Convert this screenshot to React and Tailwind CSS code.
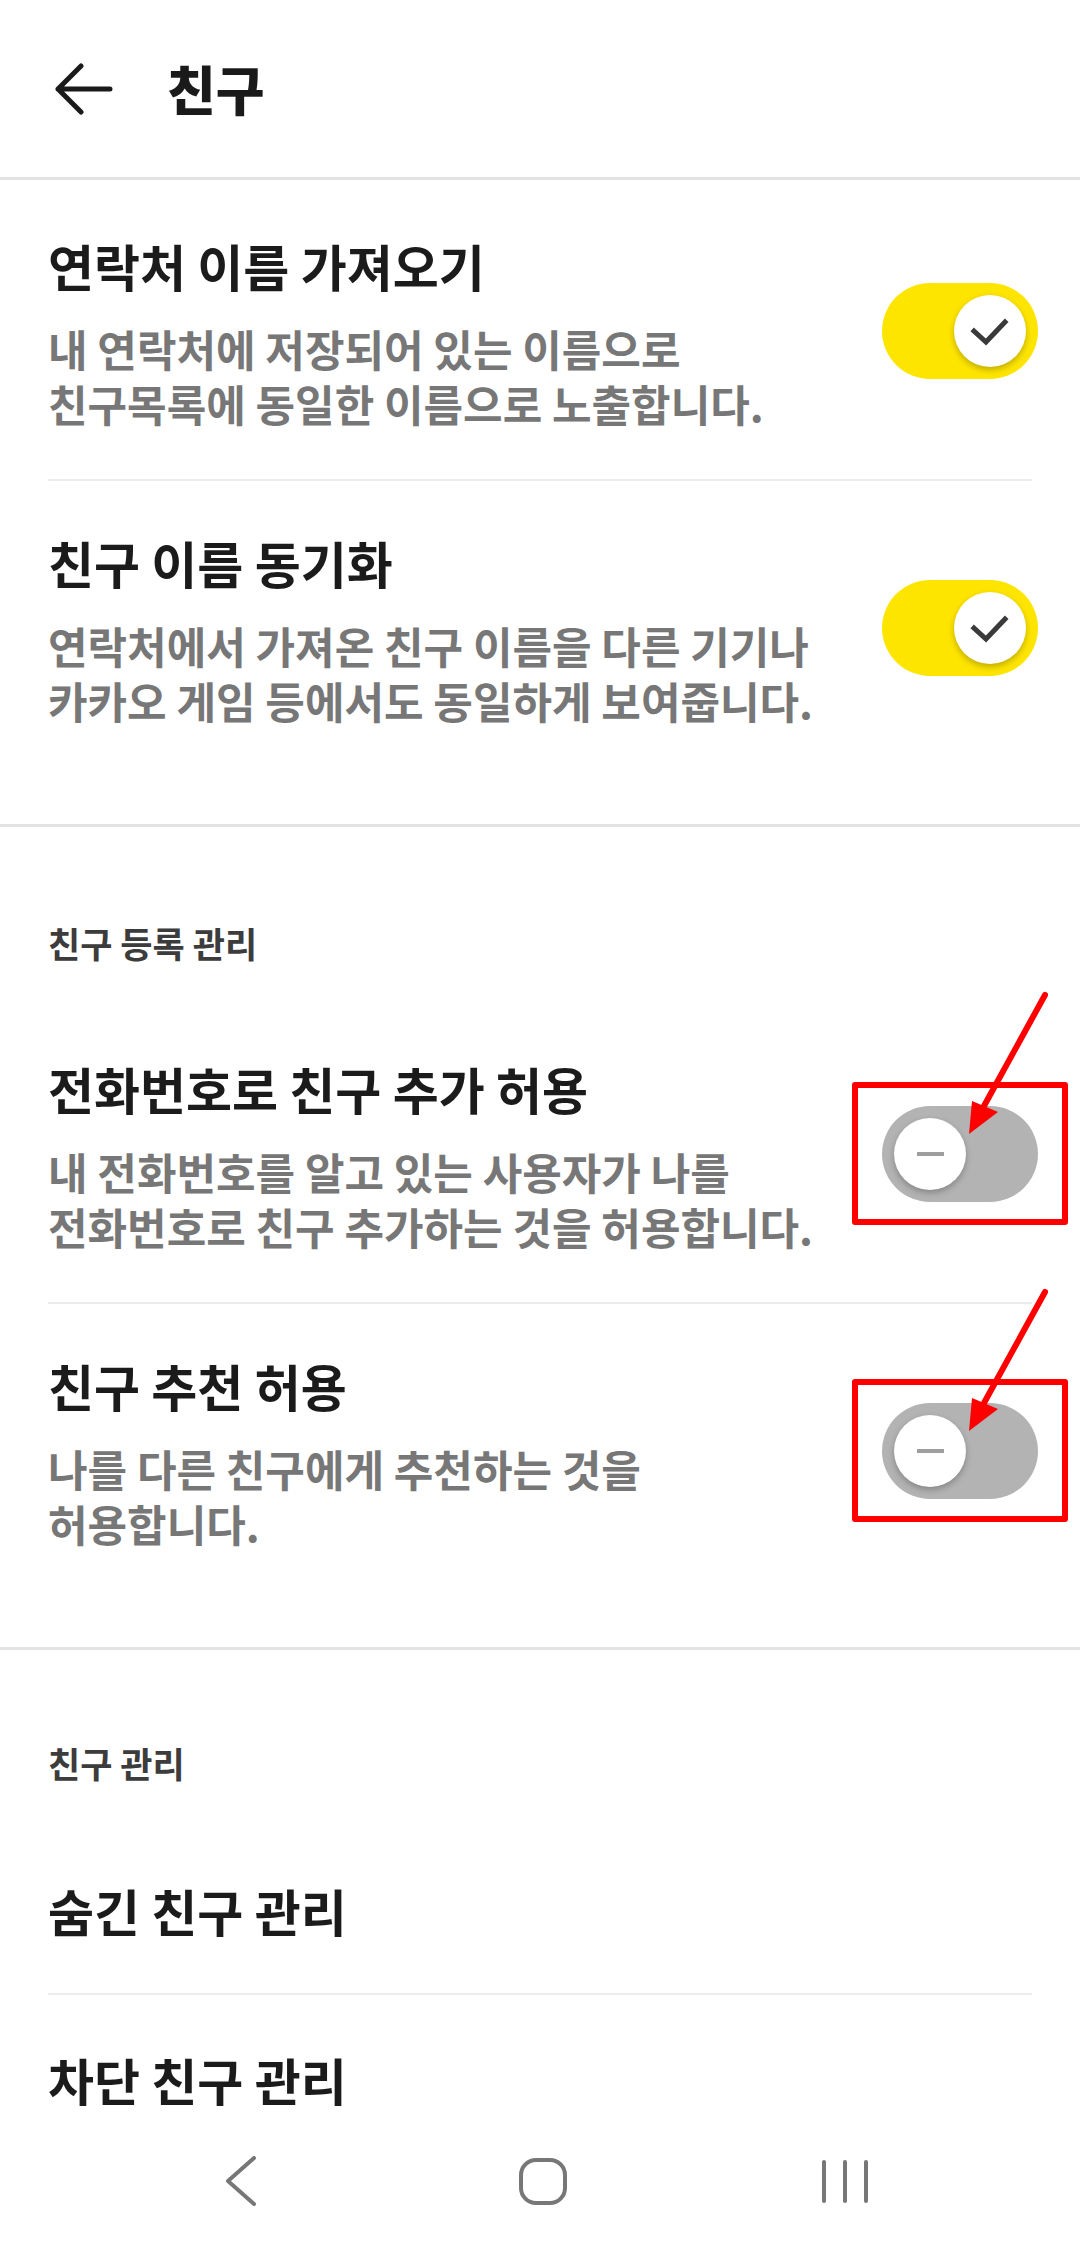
import React from "react";

const font = "font-['Noto_Sans_CJK_KR','Noto_Sans',sans-serif]";

// Toggle switch (Kakao yellow when on)
function Toggle({ on }) {
  return (
    <div
      className={`w-[156px] h-[96px] rounded-full flex items-center px-[12px] ${
        on ? "bg-[#fee500] justify-end" : "bg-[#b3b3b3] justify-start"
      }`}
    >
      <div className="w-[72px] h-[72px] rounded-full bg-white shadow-[0_3px_6px_rgba(0,0,0,0.25)] flex items-center justify-center">
        {on ? (
          <svg width="72" height="72" viewBox="0 0 72 72">
            <path
              d="M20 36 L32 47 L51 27"
              fill="none"
              stroke="#3a3a3a"
              strokeWidth="5"
              strokeLinecap="square"
            />
          </svg>
        ) : (
          <div className="w-[27px] h-[4px] bg-[#9e9e9e]" />
        )}
      </div>
    </div>
  );
}

// Red annotation box + arrow drawn over a toggle
function Marked({ children }) {
  return (
    <div className="relative">
      {children}
      <div className="absolute left-[-30px] top-[-24px] w-[216px] h-[143px] border-[6px] border-[#ff0000] rounded-[3px] pointer-events-none" />
      <svg
        className="absolute left-[60px] top-[-120px] pointer-events-none"
        width="120"
        height="160"
        viewBox="0 0 120 160"
      >
        <line x1="103" y1="9" x2="42" y2="120" stroke="#ff0000" strokeWidth="6" strokeLinecap="round" />
        <polygon points="27,148 30,115 56,126" fill="#ff0000" />
      </svg>
    </div>
  );
}

function ToggleRow({ title, lines, on, marked, last, first }) {
  const toggle = <Toggle on={on} />;
  return (
    <div
      className={`flex items-center justify-between ${first ? "pt-[50px]" : "pt-[46px]"} pb-[48px] ${
        last ? "" : "border-b-2 border-[#ececec]"
      }`}
    >
      <div>
        <div className="text-[50px] leading-[70px] font-bold text-[#1b1b1b]">{title}</div>
        <div className="mt-[21px] text-[43px] leading-[55px] font-semibold text-[#777777]">
          {lines.map((l) => (
            <div key={l}>{l}</div>
          ))}
        </div>
      </div>
      <div className="mr-[-6px]">{marked ? <Marked>{toggle}</Marked> : toggle}</div>
    </div>
  );
}

function SectionHeader({ children }) {
  return (
    <div className="text-[35px] leading-[40px] font-semibold text-[#3c3c3c] mb-[44px]">{children}</div>
  );
}

function LinkRow({ children, last }) {
  return (
    <div
      className={`h-[168px] flex items-center text-[50px] font-bold text-[#1b1b1b] ${
        last ? "" : "border-b-2 border-[#ececec]"
      }`}
    >
      {children}
    </div>
  );
}

export default function App() {
  return (
    <div className={`w-[1080px] h-[2248px] bg-white flex flex-col overflow-hidden ${font}`}>
      {/* Header */}
      <div className="h-[180px] shrink-0 flex items-center pl-[55px] border-b-[3px] border-[#e3e3e3]">
        <svg width="58" height="52" viewBox="0 0 58 52">
          <path
            d="M3 26 H55 M3 26 L26 3 M3 26 L26 49"
            fill="none"
            stroke="#1a1a1a"
            strokeWidth="5"
            strokeLinecap="round"
            strokeLinejoin="round"
          />
        </svg>
        <div className="ml-[54px] text-[53px] font-black text-[#1a1a1a] leading-none">친구</div>
      </div>

      <div className="flex-1 overflow-hidden">
        {/* Contacts */}
        <div className="px-[48px] pb-[48px] border-b-[3px] border-[#e3e3e3]">
          <ToggleRow
            first
            on
            title="연락처 이름 가져오기"
            lines={["내 연락처에 저장되어 있는 이름으로", "친구목록에 동일한 이름으로 노출합니다."]}
          />
          <ToggleRow
            last
            on
            title="친구 이름 동기화"
            lines={["연락처에서 가져온 친구 이름을 다른 기기나", "카카오 게임 등에서도 동일하게 보여줍니다."]}
          />
        </div>

        {/* Friend registration */}
        <div className="px-[48px] pt-[96px] pb-[48px] border-b-[3px] border-[#e3e3e3]">
          <SectionHeader>친구 등록 관리</SectionHeader>
          <ToggleRow
            first={false}
            marked
            on={false}
            title="전화번호로 친구 추가 허용"
            lines={["내 전화번호를 알고 있는 사용자가 나를", "전화번호로 친구 추가하는 것을 허용합니다."]}
          />
          <ToggleRow
            last
            marked
            on={false}
            title="친구 추천 허용"
            lines={["나를 다른 친구에게 추천하는 것을", "허용합니다."]}
          />
        </div>

        {/* Friend management */}
        <div className="px-[48px] pt-[93px]">
          <SectionHeader>친구 관리</SectionHeader>
          <LinkRow>숨긴 친구 관리</LinkRow>
          <LinkRow last>차단 친구 관리</LinkRow>
        </div>
      </div>

      {/* Android nav bar */}
      <div className="h-[134px] shrink-0 bg-white flex items-center justify-center pl-[6px]">
        <div className="w-[302px] flex justify-center">
          <svg width="34" height="50" viewBox="0 0 34 50">
            <path d="M30 2 L4 25 L30 48" fill="none" stroke="#777777" strokeWidth="4" strokeLinecap="round" strokeLinejoin="round" />
          </svg>
        </div>
        <div className="w-[302px] flex justify-center">
          <div className="w-[48px] h-[47px] rounded-[17px] border-[4px] border-[#777777]" />
        </div>
        <div className="w-[302px] flex justify-center gap-[17px]">
          <div className="w-[4px] h-[43px] rounded-full bg-[#777777]" />
          <div className="w-[4px] h-[43px] rounded-full bg-[#777777]" />
          <div className="w-[4px] h-[43px] rounded-full bg-[#777777]" />
        </div>
      </div>
    </div>
  );
}
